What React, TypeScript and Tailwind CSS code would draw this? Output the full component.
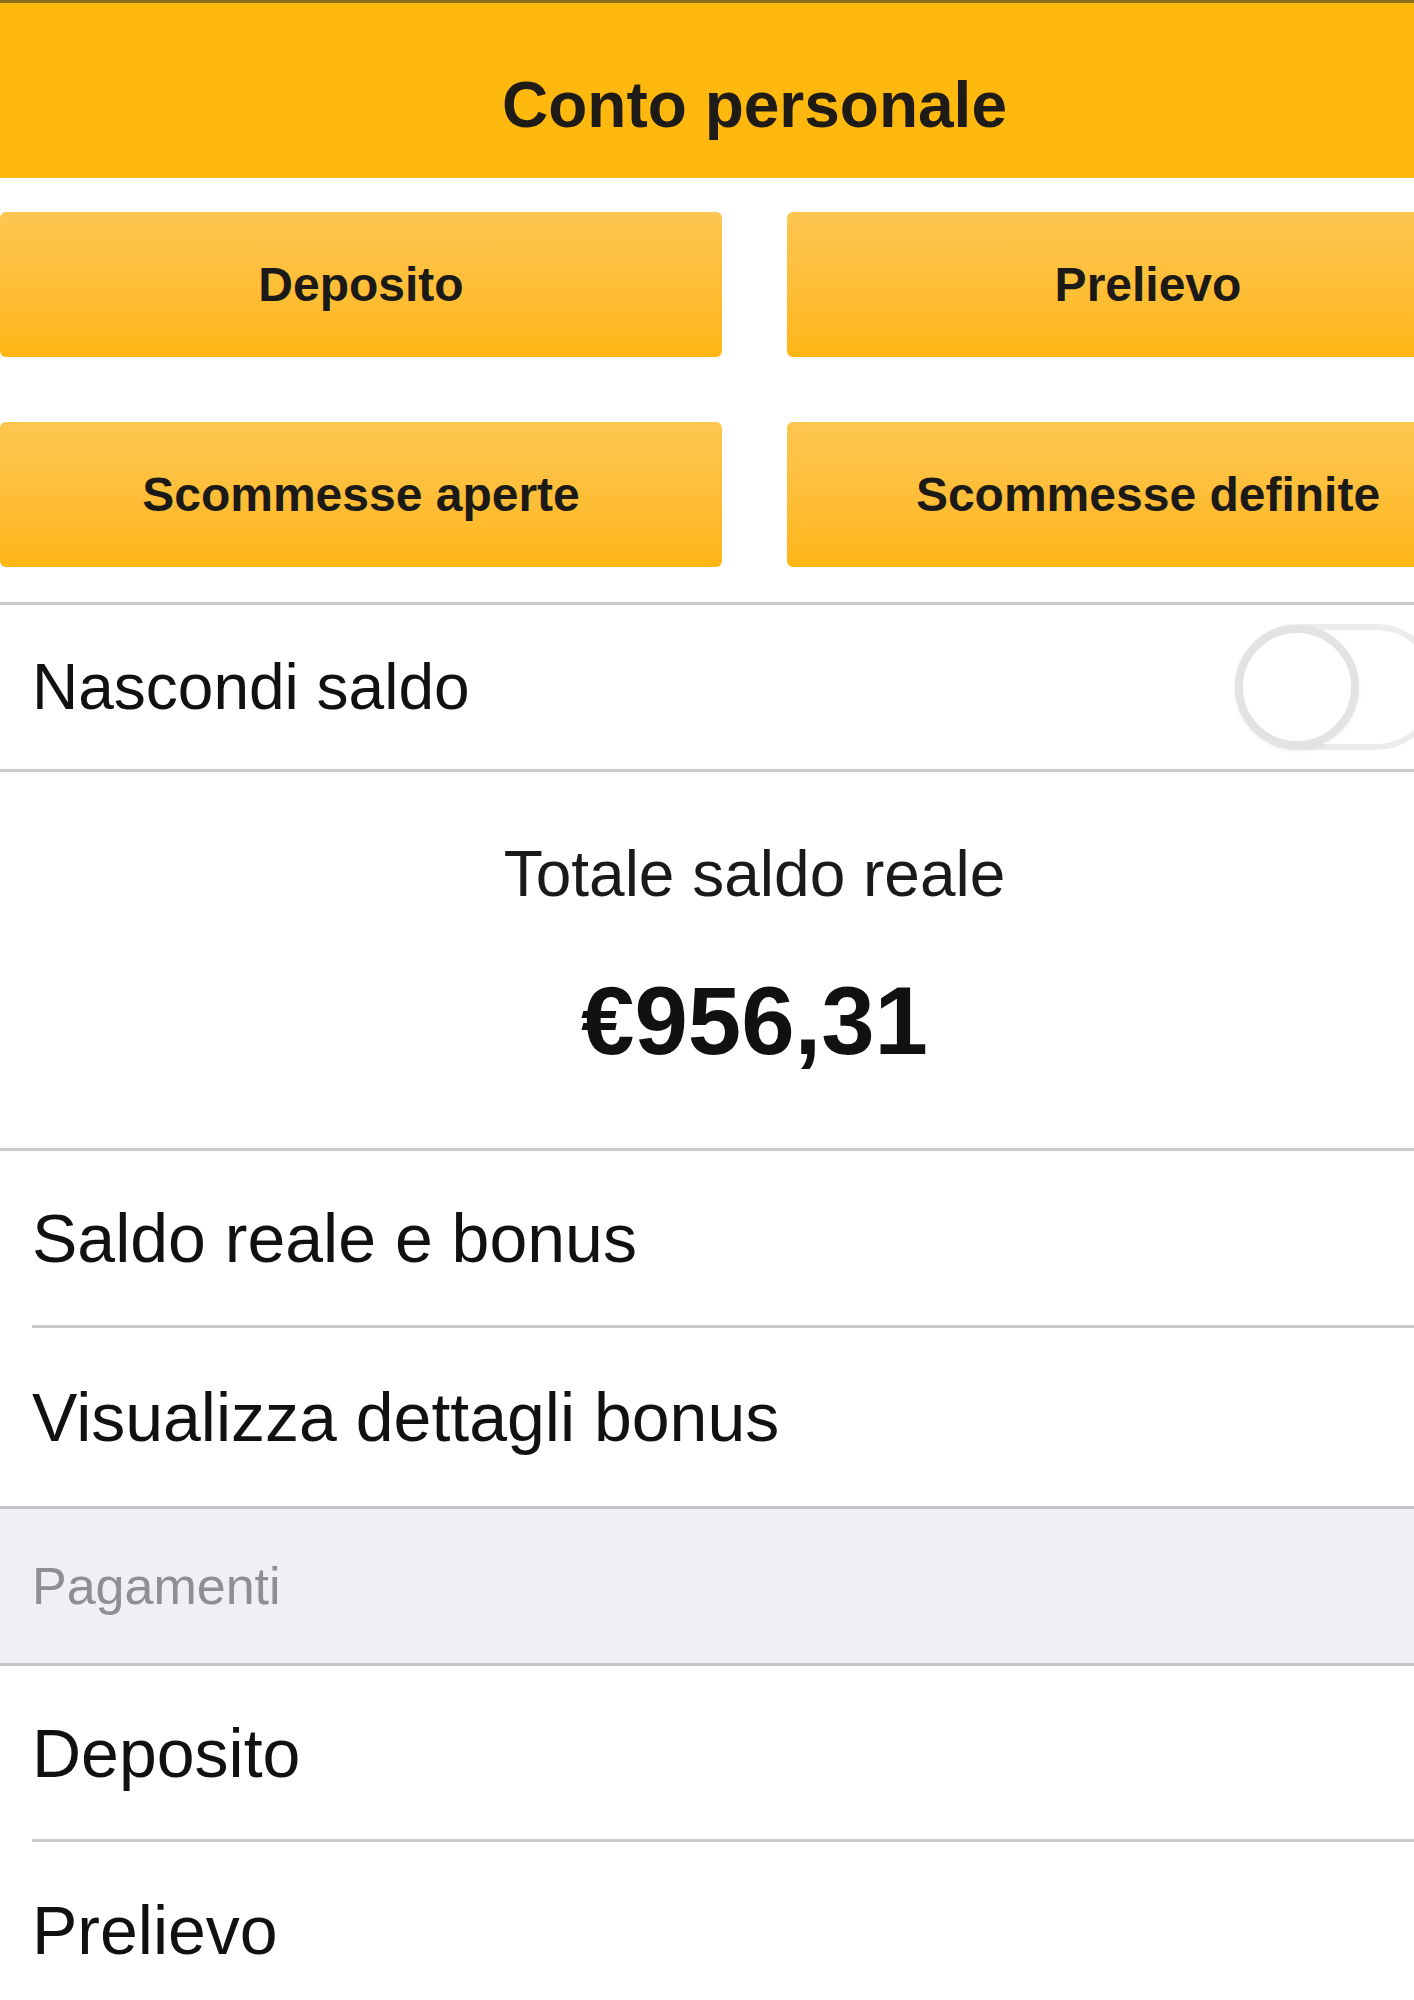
import React from "react";

const font = { fontFamily: '"Liberation Sans", Arial, sans-serif' };

function ActionButton({ label }: { label: string }) {
    return (
        <button className="h-[145px] rounded-[6px] bg-gradient-to-b from-[#fdc64f] to-[#ffb612] text-[48px] font-bold text-[#1c1a17] flex items-center justify-center">
            {label}
        </button>
    );
}

// list row with an inset hairline under it (the last one in a group has none)
function ListRow({ label, height, divider }: { label: string; height: string; divider: boolean }) {
    return (
        <div className="pl-[32px]">
            <div className={`${height} flex items-center text-[68px] text-[#111] ${divider ? "border-b-[3px] border-[#cbcbcf]" : ""}`}>
                {label}
            </div>
        </div>
    );
}

export default function App() {
    return (
        <div className="w-[1414px] min-h-[2000px] overflow-hidden bg-white" style={font}>
            <div className="w-[1509px]">
                {/* Header */}
                <header className="h-[178px] bg-[#ffb80d] border-t-[3px] border-[#8a6c1c] flex items-center justify-center">
                    <h1 className="text-[64px] font-bold text-[#1f1c17] mt-[28px]">Conto personale</h1>
                </header>

                {/* Quick action buttons */}
                <div className="grid grid-cols-[722px_722px] gap-x-[65px] gap-y-[65px] pt-[34px] pb-[35px]">
                    <ActionButton label="Deposito" />
                    <ActionButton label="Prelievo" />
                    <ActionButton label="Scommesse aperte" />
                    <ActionButton label="Scommesse definite" />
                </div>

                {/* Hide balance toggle */}
                <div className="h-[170px] border-y-[3px] border-[#cbcbcf] flex items-center justify-between pl-[32px] pr-[70px]">
                    <span className="text-[64px] text-[#111]">Nascondi saldo</span>
                    <div className="w-[204px] h-[126px] rounded-full bg-white border-[6px] border-[#ececee] flex items-center">
                        <div className="w-[124px] h-[124px] -ml-[6px] rounded-full bg-white border-[8px] border-[#e3e3e6] shadow-[0_2px_4px_rgba(0,0,0,0.06)]"></div>
                    </div>
                </div>

                {/* Balance */}
                <div className="flex flex-col items-center pt-[65px] pb-[79px]">
                    <p className="text-[64px] text-[#1a1a1a] leading-[74px]">Totale saldo reale</p>
                    <p className="text-[96px] font-bold text-[#111] leading-[96px] mt-[62px]">€956,31</p>
                </div>

                <div className="border-t-[3px] border-[#cbcbcf]">
                    <ListRow label="Saldo reale e bonus" height="h-[177px]" divider />
                    <ListRow label="Visualizza dettagli bonus" height="h-[178px]" divider={false} />
                </div>

                {/* Section header */}
                <div className="h-[160px] bg-[#efeff4] border-y-[3px] border-[#c6c6ca] flex items-center pl-[32px]">
                    <span className="text-[52px] text-[#8e8e93]">Pagamenti</span>
                </div>

                <div>
                    <ListRow label="Deposito" height="h-[176px]" divider />
                    <ListRow label="Prelievo" height="h-[176px]" divider={false} />
                </div>
            </div>
        </div>
    );
}
